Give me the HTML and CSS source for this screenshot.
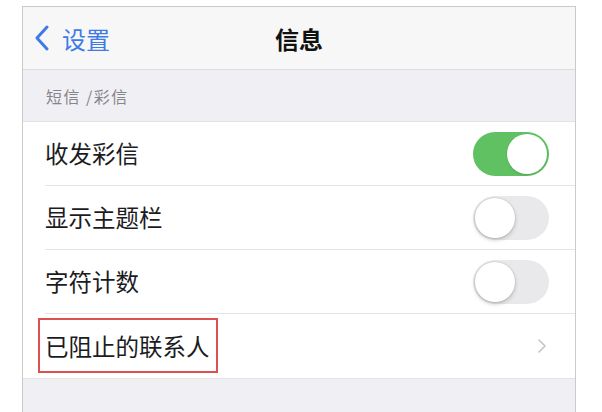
FILE: index.html
```html
<!DOCTYPE html>
<html lang="zh-CN">
<head>
  <meta charset="UTF-8" />
  <title>信息</title>
  <meta name="viewport" content="width=device-width, initial-scale=1.0" />
  <link rel="stylesheet" href="styles.css">
</head>
<body>
  <div class="screen">
    <header class="nav">
      <a class="back" href="#">
        <svg class="back-icon" viewBox="0 0 16 26" width="16" height="26">
          <path d="M13 2 L3 13 L13 24" fill="none" stroke="#3d7be6" stroke-width="3" stroke-linecap="round" stroke-linejoin="round"/>
        </svg>
        <span>设置</span>
      </a>
      <h1>信息</h1>
      <span></span>
    </header>

    <div class="section-title">短信 /彩信</div>

    <ul class="list">
      <li class="row">
        <span class="label">收发彩信</span>
        <span class="switch on"></span>
      </li>
      <li class="row">
        <span class="label">显示主题栏</span>
        <span class="switch"></span>
      </li>
      <li class="row">
        <span class="label">字符计数</span>
        <span class="switch"></span>
      </li>
      <li class="row">
        <span class="label marked">已阻止的联系人</span>
        <svg class="chevron" viewBox="0 0 10 16" width="10" height="16">
          <path d="M2 2 L8 8 L2 14" fill="none" stroke="#c4c4c7" stroke-width="1.6" stroke-linecap="round" stroke-linejoin="round"/>
        </svg>
      </li>
    </ul>
  </div>
</body>
</html>
```

FILE: styles.css
```css
body {
  margin: 0;
  background: #fff;
  font-family: "Noto Sans CJK SC", "Noto Sans", sans-serif;
  height: 412px;
  overflow: hidden;
}
.screen {
  margin: 6px 0 0 22px;
  width: 552px;
  height: 406px;
  border: 1px solid #cacaca;
  border-bottom: none;
  background: #efeff4;
}
.nav {
  height: 62px;
  background: #f7f7f8;
  border-bottom: 1px solid #dcdcdf;
  display: grid;
  grid-template-columns: 1fr auto 1fr;
  align-items: center;
}
.back {
  display: flex;
  align-items: center;
  gap: 12px;
  padding-left: 11px;
  color: #3d7be6;
  text-decoration: none;
  font-size: 24px;
}
.nav h1 {
  margin: 0;
  font-size: 24px;
  font-weight: 700;
  color: #111;
}
.section-title {
  height: 51px;
  padding-left: 23px;
  display: flex;
  align-items: center;
  font-size: 16px;
  letter-spacing: 1.5px;
  color: #85858a;
  border-bottom: 1px solid #e2e2e5;
}
.list {
  list-style: none;
  margin: 0;
  padding: 0 0 0 22px;
  background: #fff;
  border-bottom: 1px solid #e2e2e5;
}
.row {
  height: 63px;
  display: flex;
  align-items: center;
  justify-content: space-between;
  padding-right: 26px;
  border-bottom: 1px solid #e4e4e7;
}
.row:last-child {
  border-bottom: none;
  height: 64px;
}
.label {
  font-size: 23.5px;
  line-height: 1.4;
  color: #1c1c1e;
}
.marked {
  position: relative;
}
.marked::after {
  content: "";
  position: absolute;
  left: -7px;
  right: -8px;
  top: -12px;
  bottom: -11px;
  border: 2px solid #de5050;
}
.switch {
  position: relative;
  width: 76px;
  height: 44px;
  border-radius: 22px;
  background: #e9e9eb;
}
.switch::after {
  content: "";
  position: absolute;
  top: 2px;
  left: 2px;
  width: 40px;
  height: 40px;
  border-radius: 50%;
  background: #fff;
  box-shadow: 0 2px 4px rgba(0, 0, 0, 0.2), 0 0 0 1px rgba(0, 0, 0, 0.06);
}
.switch.on {
  background: #5fc162;
}
.switch.on::after {
  left: 34px;
  box-shadow: 0 1px 2px rgba(0, 0, 0, 0.15);
}
.chevron {
  margin-right: 2px;
}
```
